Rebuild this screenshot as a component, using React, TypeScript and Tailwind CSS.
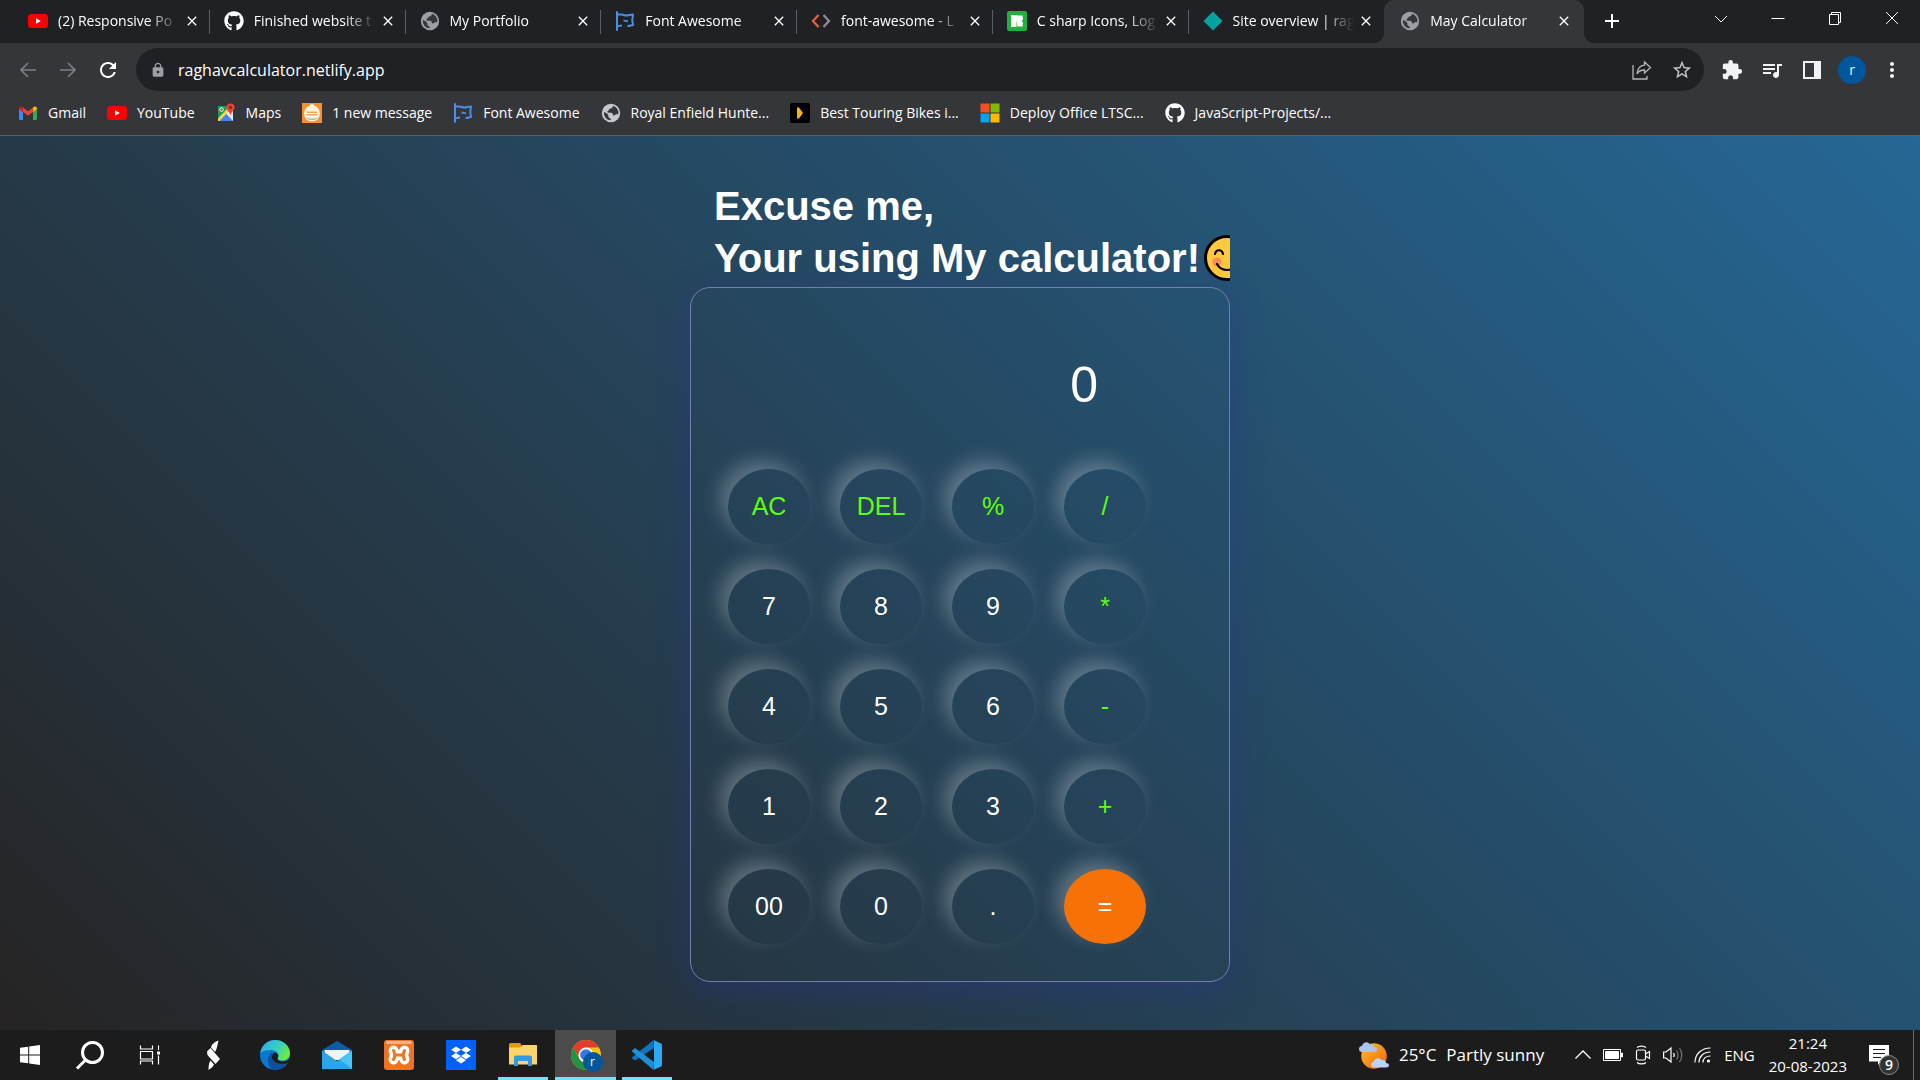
import type { ReactNode } from 'react';
import {
  MdAdd,
  MdClose,
  MdExtension,
  MdLock,
  MdMoreVert,
  MdQueueMusic,
  MdRefresh,
  MdStarBorder,
} from 'react-icons/md';
import { FaDropbox, FaGithub } from 'react-icons/fa';

/* ---------- favicons ---------- */

function YouTubeIcon() {
  return (
    <svg viewBox="0 0 20 20" className="size-5">
      <rect x="0" y="3" width="20" height="14" rx="3.5" fill="#ff0000" />
      <path d="M8 7.2v5.6l4.8-2.8z" fill="#fff" />
    </svg>
  );
}

function GlobeIcon({ light = false }: { light?: boolean }) {
  return (
    <svg viewBox="0 0 20 20" className="size-5">
      <circle cx="10" cy="10" r="9.2" fill={light ? '#c4c7cb' : '#9aa0a6'} />
      <path
        d="M12 2.8c-.3 1.6-1 2.6-2.6 2.8C8 5.900 8.300 7.200 7.200 7.700c-1.200.5-1 1.500-.2 1.800 1.200.5 3-.2 4.100.6 1.200.9.200 2.100 1.400 2.300 1.400.2 2-1.400 3.400-1.500.6 0 .9.300 1.300.500A7.300 7.300 0 0 0 12 2.800zM2.900 9c1.700.8 3.700 1.700 4.300 2.900.5 1-.2 1.800.6 2.500.8.7 1.800.600 1.900 1.500v1.400A7.300 7.300 0 0 1 2.900 9z"
        fill="#35363a"
      />
    </svg>
  );
}

function FlagIcon() {
  return (
    <svg viewBox="0 0 20 20" className="size-5" fill="none" stroke="#4a8fe7" strokeWidth="2">
      <path d="M2 1v18" strokeLinecap="round" />
      <path d="M2 3.500h4.500c2 0 2.500 1 5 1s3.500-1 6.500-1c-.8 3-.8 7.500 0 10.500-2.500.5-3.500 1-5.500 1" strokeLinejoin="round" />
      <path d="M2 15.500c2-.5 3-1 5-1M8.500 9.500c1.500 0 2.500.8 4.500.8" />
    </svg>
  );
}

function CodeIcon() {
  return (
    <svg viewBox="0 0 20 20" className="size-5" fill="none" strokeWidth="2.200">
      <path d="M7.500 4 2 10l5.500 6" stroke="#e8623a" />
      <path d="M12.500 4 18 10l-5.500 6" stroke="#8d8f92" />
    </svg>
  );
}

function Icons8Icon() {
  return (
    <svg viewBox="0 0 20 20" className="size-5">
      <rect width="20" height="20" rx="2" fill="#1fb141" />
      <path d="M4 4h5.500v12H4zM9.500 4.500h6l.5 4-1.500 1.500 1.500 1.500-.5 4h-5l-1-6z" fill="#fff" />
    </svg>
  );
}

function DiamondIcon() {
  return (
    <svg viewBox="0 0 20 20" className="size-5">
      <path d="M10 .500 19.500 10 10 19.500.500 10z" fill="#05a3a0" />
    </svg>
  );
}

function GmailIcon() {
  return (
    <svg viewBox="0 0 20 20" className="size-5">
      <path d="M1 5v10.500c0 .8.600 1.500 1.400 1.500H5V9z" fill="#4285f4" />
      <path d="M19 5v10.500c0 .8-.6 1.500-1.400 1.500H15V9z" fill="#34a853" />
      <path d="M15 4.500V9l4-3v-.6c0-1.700-1.900-2.600-3.200-1.500z" fill="#fbbc04" />
      <path d="M5 9V4.500l5 3.800 5-3.800V9l-5 3.800z" fill="#ea4335" />
      <path d="M1 5.400V6l4 3V4.500l-.8-.6C2.900 2.800 1 3.700 1 5.400z" fill="#c5221f" />
    </svg>
  );
}

function MapsIcon() {
  return (
    <svg viewBox="0 0 20 20" className="size-5">
      <path d="M2 3h15v15H2z" fill="#e8eaed" />
      <path d="M2 3h12L2 16z" fill="#1f9d55" />
      <path d="m2 18 7.500-8L17 18z" fill="#4285f4" />
      <path d="M2 15.500 12 5l2 2L3.500 18H2z" fill="#fbd24c" />
      <circle cx="5.500" cy="6.500" r="1.800" fill="none" stroke="#fff" strokeWidth="1" />
      <path d="M14.500.500a4 4 0 0 1 4 4c0 3-3.300 4-4 8-.7-4-4-5-4-8a4 4 0 0 1 4-4z" fill="#ea4335" />
      <circle cx="14.500" cy="4.500" r="1.400" fill="#8c1a11" />
    </svg>
  );
}

function MessageIcon() {
  return (
    <svg viewBox="0 0 20 20" className="size-5">
      <rect width="20" height="20" fill="#f7922d" />
      <circle cx="10" cy="10.500" r="8" fill="#fdf3e3" />
      <path d="M5 8.500h10v1.500H5zM4.500 11h11v1.500h-11z" fill="#f2a65a" />
      <path d="M3.500 14c2 4 11 4 13 0-3 2-10 2-13 0z" fill="#8fc28b" />
      <path d="M8 1.500h4v1.500H8z" fill="#fff" />
    </svg>
  );
}

function PlayBadgeIcon() {
  return (
    <svg viewBox="0 0 20 20" className="size-5">
      <rect width="20" height="20" rx="2" fill="#000" />
      <path d="M7 4.500h2L13 10l-4 5.500H7z" fill="#f5b50a" />
    </svg>
  );
}

function MicrosoftIcon() {
  return (
    <svg viewBox="0 0 20 20" className="size-5">
      <path d="M.500.500h9v9h-9z" fill="#f25022" />
      <path d="M10.500.500h9v9h-9z" fill="#7fba00" />
      <path d="M.500 10.500h9v9h-9z" fill="#00a4ef" />
      <path d="M10.500 10.500h9v9h-9z" fill="#ffb900" />
    </svg>
  );
}

/* ---------- browser chrome ---------- */

type Tab = { title: string; icon: ReactNode; active?: boolean };

const tabs: Tab[] = [
  { title: '(2) Responsive Po', icon: <YouTubeIcon /> },
  { title: 'Finished website t', icon: <FaGithub className="size-5" /> },
  { title: 'My Portfolio', icon: <GlobeIcon /> },
  { title: 'Font Awesome', icon: <FlagIcon /> },
  { title: 'font-awesome - L', icon: <CodeIcon /> },
  { title: 'C sharp Icons, Log', icon: <Icons8Icon /> },
  { title: 'Site overview | rag', icon: <DiamondIcon /> },
  { title: 'May Calculator', icon: <GlobeIcon />, active: true },
];

const bookmarks: { label: string; icon: ReactNode }[] = [
  { label: 'Gmail', icon: <GmailIcon /> },
  { label: 'YouTube', icon: <YouTubeIcon /> },
  { label: 'Maps', icon: <MapsIcon /> },
  { label: '1 new message', icon: <MessageIcon /> },
  { label: 'Font Awesome', icon: <FlagIcon /> },
  { label: 'Royal Enfield Hunte...', icon: <GlobeIcon light /> },
  { label: 'Best Touring Bikes i...', icon: <PlayBadgeIcon /> },
  { label: 'Deploy Office LTSC...', icon: <MicrosoftIcon /> },
  { label: 'JavaScript-Projects/...', icon: <FaGithub className="size-5" /> },
];

function TabItem({ tab, divider }: { tab: Tab; divider: boolean }) {
  return (
    <div
      role="tab"
      aria-selected={!!tab.active}
      className={
        tab.active
          ? 'relative flex min-w-0 flex-1 items-center rounded-t-[10px] bg-[#35363a] pr-3 pb-0.5 pl-4'
          : 'relative flex min-w-0 flex-1 items-center pr-2.5 pb-0.5 pl-3.5'
      }
    >
      {tab.active && (
        <>
          <span className="absolute bottom-0 -left-2.5 size-2.5 bg-[radial-gradient(circle_at_0_0,transparent_10px,#35363a_10px)]" />
          <span className="absolute -right-2.5 bottom-0 size-2.5 bg-[radial-gradient(circle_at_100%_0,transparent_10px,#35363a_10px)]" />
        </>
      )}
      {tab.icon}
      <span className="ml-2.5 min-w-0 flex-1 overflow-hidden whitespace-nowrap [mask-image:linear-gradient(to_right,#000_calc(100%-32px),transparent)]">
        {tab.title}
      </span>
      <button aria-label={`Close ${tab.title}`} className="ml-1 flex shrink-0">
        <MdClose className="size-4" />
      </button>
      {divider && <span className="absolute top-2.5 right-0 h-6 w-px bg-[#5b5e63]" />}
    </div>
  );
}

function WindowControls() {
  return (
    <div className="flex h-9 items-center">
      {[
        ['Search tabs', 'M3 7l6 6 6-6'],
        ['Minimize', 'M2.500 9.500h13'],
        ['Restore', 'M3.500 5.500h9v10h-9zM5.500 5.500v-2h9v10h-2'],
        ['Close', 'M3 3l12 12M15 3 3 15'],
      ].map(([name, d]) => (
        <button key={name} aria-label={name} className="flex w-[57px] justify-center">
          <svg viewBox="0 0 18 18" className="size-[18px]" fill="none" stroke="#fff" strokeWidth="1">
            <path d={d} />
          </svg>
        </button>
      ))}
    </div>
  );
}

function Arrow({ name, d }: { name: string; d: string }) {
  return (
    <button aria-label={name} className="flex w-10 justify-center">
      <svg viewBox="0 0 20 20" className="size-5" fill="none" stroke="#7d8084" strokeWidth="1.600">
        <path d={d} />
      </svg>
    </button>
  );
}

function BrowserChrome() {
  return (
    <header className="bg-[#35363a] font-['Open_Sans',sans-serif] text-sm text-white">
      <div className="flex h-[43px] justify-between bg-[#202124] pl-3.5">
        <div className="flex min-w-0 flex-1">
          <div role="tablist" className="flex max-w-[1570px] min-w-0 flex-1">
            {tabs.map((tab, i) => (
              <TabItem key={tab.title} tab={tab} divider={i < tabs.length - 2} />
            ))}
          </div>
          <button aria-label="New tab" className="ml-4 flex items-center pb-0.5">
            <MdAdd className="size-6" />
          </button>
        </div>
        <WindowControls />
      </div>

      <div className="flex h-[53px] items-center pr-2 pl-2">
        <Arrow name="Back" d="M18 10H3M10 3l-7 7 7 7" />
        <Arrow name="Forward" d="M2 10h15M10 3l7 7-7 7" />
        <button aria-label="Reload" className="flex w-10 justify-center">
          <MdRefresh className="size-6" />
        </button>
        <div className="ml-2 flex h-[43px] min-w-0 flex-1 items-center rounded-full bg-[#202124] pr-0.5 pl-3.5">
          <MdLock className="size-4 text-[#9aa0a6]" />
          <input
            aria-label="Address"
            defaultValue="raghavcalculator.netlify.app"
            className="ml-3 min-w-0 flex-1 bg-transparent text-base outline-none"
          />
          <button aria-label="Share" className="flex w-10 justify-center">
            <svg viewBox="0 0 20 20" className="size-5" fill="none" stroke="#b4b6b9" strokeWidth="1.300">
              <path d="M1 5v14h14v-3" />
              <path d="M12.500 2l6 5.500-6 5.500v-3c-3.500 0-6 1-7.500 4 .5-5 3-8.500 7.500-8.800z" />
            </svg>
          </button>
          <button aria-label="Bookmark this tab" className="flex w-10 justify-center text-[#c4c7ca]">
            <MdStarBorder className="size-[22px]" />
          </button>
        </div>
        <div className="ml-2 flex items-center text-[#f1f3f4]">
          <button aria-label="Extensions" className="flex w-10 justify-center">
            <MdExtension className="size-[22px]" />
          </button>
          <button aria-label="Media" className="flex w-10 justify-center">
            <MdQueueMusic className="size-6" />
          </button>
          <button aria-label="Side panel" className="flex w-10 justify-center">
            <svg viewBox="0 0 18 18" className="size-[18px]" fill="currentColor">
              <path d="M0 0h18v18H0zM2 2v14h9V2z" fillRule="evenodd" />
            </svg>
          </button>
          <button aria-label="Profile" className="flex w-10 justify-center">
            <span className="flex size-7 items-center justify-center rounded-full bg-[#01579b] text-sm leading-none">
              r
            </span>
          </button>
          <button aria-label="Menu" className="flex w-10 justify-center">
            <MdMoreVert className="size-6" />
          </button>
        </div>
      </div>

      <nav className="flex h-10 items-center gap-[21px] border-b border-[#5f6063] pb-1.5 pl-[18px] whitespace-nowrap">
        {bookmarks.map((b) => (
          <a key={b.label} href="#" className="flex items-center gap-2.5">
            {b.icon}
            {b.label}
          </a>
        ))}
      </nav>
    </header>
  );
}

/* ---------- calculator ---------- */

const keys = [
  'AC', 'DEL', '%', '/',
  '7', '8', '9', '*',
  '4', '5', '6', '-',
  '1', '2', '3', '+',
  '00', '0', '.', '=',
];

const operators = ['AC', 'DEL', '%', '/', '*', '-', '+'];

function SmileIcon() {
  return (
    <svg viewBox="0 0 46 46" className="ml-1 size-[46px] shrink-0" role="img" aria-label="Smiling face">
      <circle cx="23" cy="23" r="21.500" fill="#ffc83d" stroke="#000" strokeWidth="3" />
      <circle cx="13" cy="27" r="4.500" fill="#ff8a55" />
      <circle cx="33" cy="27" r="4.500" fill="#ff8a55" />
      <path
        d="M11 19c1-5 7-5 8 0M27 19c1-5 7-5 8 0M13 29c4 8 16 8 20 0"
        fill="none"
        stroke="#000"
        strokeWidth="2.200"
        strokeLinecap="round"
      />
    </svg>
  );
}

function Calculator() {
  return (
    <main className="flex flex-1 flex-col items-center bg-[linear-gradient(45deg,#262424,#256795)] pt-11 pb-12 font-['Liberation_Sans',Arial,sans-serif] text-white">
      <div className="w-[540px] max-w-full">
        <h1 className="overflow-hidden pl-6 text-[40px] leading-[52px] font-bold whitespace-nowrap">
          Excuse me,
          <span className="flex items-center">
            Your using My calculator!
            <SmileIcon />
          </span>
        </h1>
        <section className="mt-[3px] rounded-[20px] border border-[#7380a8] p-[37px] shadow-[0_8px_32px_rgba(45,50,150,0.4)]">
          <input
            aria-label="Result"
            defaultValue="0"
            className="mb-6 block h-[120px] w-[370px] bg-transparent text-right text-[50px] outline-none"
          />
          <div className="grid grid-cols-[repeat(4,82px)] gap-x-[30px] gap-y-[25px]">
            {keys.map((key) => (
              <button
                key={key}
                className={
                  key === '='
                    ? 'h-[75px] rounded-[50%] bg-[#f77206] text-[25px] shadow-[-8px_-8px_20px_rgba(255,255,255,0.27)]'
                    : operators.includes(key)
                      ? 'h-[75px] rounded-[50%] text-[25px] text-[#5dff0a] shadow-[-8px_-8px_20px_rgba(255,255,255,0.27)]'
                      : 'h-[75px] rounded-[50%] text-[25px] shadow-[-8px_-8px_20px_rgba(255,255,255,0.27)]'
                }
              >
                {key}
              </button>
            ))}
          </div>
        </section>
      </div>
    </main>
  );
}

/* ---------- taskbar ---------- */

function StartIcon() {
  return (
    <svg viewBox="0 0 20 20" className="size-5" fill="#fff">
      <path d="M0 2.800 8.200 1.700v7.800H0zM9.200 1.500 20 0v9.500H9.200zM0 10.500h8.200v7.800L0 17.200zM9.200 10.500H20V20L9.200 18.500z" />
    </svg>
  );
}

function SearchIcon() {
  return (
    <svg viewBox="0 0 30 30" className="size-[30px]" fill="none" stroke="#fff" strokeWidth="3">
      <circle cx="17.500" cy="12.500" r="10" />
      <path d="M10.500 20 2 28.500" />
    </svg>
  );
}

function TaskViewIcon() {
  return (
    <svg viewBox="0 0 22 20" className="h-5 w-[22px]" fill="none" stroke="#fff" strokeWidth="1.200">
      <path d="M1.500.500V4h12V.500M1.500 19.500V16h12v3.500M1.500 6.500h12v7.500h-12zM19.500.500V5M19.500 10.500v9" />
      <path d="M18 6.500h3v3h-3z" fill="#fff" stroke="none" />
    </svg>
  );
}

function BoltIcon() {
  return (
    <svg viewBox="0 0 30 30" className="size-[30px]" fill="#fff">
      <path d="M20.500.500c-4.500 1.500-7 4-7.500 7l4 4.500c2-3 2.500-7 3.500-11.500z" />
      <path d="M9 11.500 12.500 8 22 19l-4.500 5-8-9z" />
      <path d="M10.500 30c0-3.500.2-7 2-9.500l3.500 4c-1 2.500-3.500 4-5.500 5.500z" />
    </svg>
  );
}

function EdgeIcon() {
  return (
    <svg viewBox="0 0 30 30" className="size-[30px]">
      <defs>
        <linearGradient id="edgeTop" x1="0" y1="0" x2="1" y2="0.500">
          <stop offset="0.200" stopColor="#2fb4e0" />
          <stop offset="0.600" stopColor="#38cfc0" />
          <stop offset="1" stopColor="#6be84a" />
        </linearGradient>
      </defs>
      <circle cx="15" cy="15" r="15" fill="#0a78d0" />
      <path
        d="M.300 13C1.500 5.500 7.500 0 15 0c9 0 15 6.500 15 13 0 5-3.800 7.500-7.500 7.500-3 0-5-1.200-4.500-2.500 2-3-1-8-7-8-5 0-9 1-10.700 3z"
        fill="url(#edgeTop)"
      />
      <path d="M8 20c0-4 2-6.500 5-7.500-2.500 3-.5 8 3.500 9.800 4 1.800 7.500 1 10.500-.3C24.500 27 20 30 15 30c-4 0-7-4.500-7-10z" fill="#0f4fa0" />
      <path d="M17.500 18.500c-.8 1.200 1.500 3 5 3 3 0 5.500-1 7.500-3.500l1 3-4.500 2.500C20 24.500 13.500 23 12 18c-.5-2.500 1-5 3-5.500 3 .5 4 3.500 2.500 6z" fill="#1c1c1c" />
    </svg>
  );
}

function MailIcon() {
  return (
    <svg viewBox="0 0 30 30" className="size-[30px]">
      <path d="M15 1 30 10v4H0v-4z" fill="#0f5ba8" />
      <path d="M2.500 10h25v10h-25z" fill="#f3f3f3" />
      <path d="M0 10.500 15 21l15-10.500V29H0z" fill="#2aa6e6" />
      <path d="m30 10.500-12.500 9L30 29z" fill="#48c6f5" />
    </svg>
  );
}

function XamppIcon() {
  return (
    <svg viewBox="0 0 30 30" className="size-[30px]">
      <rect width="30" height="30" rx="3" fill="#ee7424" />
      <rect x="2" y="1" width="26" height="3" rx="1.500" fill="#f7b184" />
      <g fill="none" strokeLinecap="round">
        <path d="M9.500 10.500Q12 15 9.500 19.500M20.500 10.500Q18 15 20.500 19.500M11 15h8" stroke="#fff" strokeWidth="10" />
        <path d="M9.500 10.500Q12 15 9.500 19.500M20.500 10.500Q18 15 20.500 19.500M11 15h8" stroke="#ee7424" strokeWidth="3" />
      </g>
    </svg>
  );
}

function FolderIcon() {
  return (
    <svg viewBox="0 0 30 30" className="size-[30px]">
      <path d="M1 5c0-1 .5-2 1.500-2H12l2 2.500h-1V8H1z" fill="#dd9b0a" />
      <path d="M1 7.500h11l2.500-2.500H28c.6 0 1 .4 1 1v18.500H1z" fill="#fdd469" />
      <path d="M6 26v-8.500c0-1.300.9-2 2-2h14c1.100 0 2 .7 2 2V26h-4v-5h-10v5z" fill="#3a96dd" />
    </svg>
  );
}

function ChromeIcon() {
  return (
    <span className="relative">
      <svg viewBox="0 0 30 30" className="size-[30px]">
        <circle cx="15" cy="15" r="15" fill="#fbc116" />
        <path d="M15 0a15 15 0 0 1 13 7.500H15a7.500 7.500 0 0 0-6.500 11.200L2 7.500A15 15 0 0 1 15 0z" fill="#e33b2e" />
        <path d="M2 7.500 8.500 18.700A7.500 7.500 0 0 0 15 22.500h6.500L15 30A15 15 0 0 1 2 7.500z" fill="#229342" />
        <circle cx="15" cy="15" r="7.500" fill="#fff" />
        <circle cx="15" cy="15" r="5.800" fill="#3578e5" />
      </svg>
      <span className="absolute top-3 left-3 flex size-5 items-center justify-center rounded-full bg-[#01579b] text-xs leading-none">
        r
      </span>
    </span>
  );
}

function CodeEditorIcon() {
  return (
    <svg viewBox="0 0 30 30" className="size-[30px]">
      <path d="M3 20.500 0 18.500v-1L21.500 0l.5 8z" fill="#0b76bd" />
      <path d="M3 8 0 10.500v1L21.500 30l.5-8z" fill="#1f8fd6" />
      <path d="M21.500 0 29 3.500c.7.300 1 .8 1 1.500v20c0 .7-.3 1.200-1 1.500L21.500 30c.5-.5.500-1 .5-1.500v-27c0-.5 0-1-.5-1.500z" fill="#2aa9f3" />
    </svg>
  );
}

function WeatherIcon() {
  return (
    <svg viewBox="0 0 30 28" className="h-7 w-[30px]">
      <defs>
        <linearGradient id="sun" x1="0" y1="0" x2="1" y2="1">
          <stop offset="0" stopColor="#f9c22b" />
          <stop offset="1" stopColor="#f2600c" />
        </linearGradient>
      </defs>
      <circle cx="15" cy="15" r="12.800" fill="url(#sun)" />
      <path d="M3 11a3 3 0 0 1 0-6C4 1 9 0 11 3.500c3-.5 4 1 4 2.500 4 0 4 5 0 5z" fill="#a9c5f5" />
      <path d="M15 26.500c-4 0-4-5-.5-5.500.5-4 6-5 8-2 3-.5 4.500 1 4.500 3 4 0 4 4.500 0 4.500z" fill="#bcd2fa" />
    </svg>
  );
}

const pinned: { name: string; icon: ReactNode; state?: 'open' | 'focused' }[] = [
  { name: 'Bolt', icon: <BoltIcon /> },
  { name: 'Edge', icon: <EdgeIcon /> },
  { name: 'Mail', icon: <MailIcon /> },
  { name: 'XAMPP', icon: <XamppIcon /> },
  {
    name: 'Dropbox',
    icon: (
      <span className="flex size-[30px] items-center justify-center bg-[#0061ff]">
        <FaDropbox className="size-5" />
      </span>
    ),
  },
  { name: 'File Explorer', icon: <FolderIcon />, state: 'open' },
  { name: 'Chrome', icon: <ChromeIcon />, state: 'focused' },
  { name: 'Code', icon: <CodeEditorIcon />, state: 'open' },
];

function Taskbar() {
  return (
    <footer className="flex h-[50px] items-stretch justify-between bg-[#1c1c1c] font-['Open_Sans',sans-serif] text-[15px] whitespace-nowrap text-white">
      <div className="flex">
        <button aria-label="Start" className="flex w-[60px] items-center justify-center">
          <StartIcon />
        </button>
        <button aria-label="Search" className="flex w-[60px] items-center justify-center">
          <SearchIcon />
        </button>
        <button aria-label="Task view" className="mr-0.5 flex w-[60px] items-center justify-center">
          <TaskViewIcon />
        </button>
        {pinned.map(({ name, icon, state }) => (
          <button
            key={name}
            aria-label={name}
            className={
              state === 'focused'
                ? 'relative ml-px flex w-[61px] items-center justify-center bg-[#4b4b4b]'
                : 'relative flex w-[62px] items-center justify-center'
            }
          >
            {icon}
            {state === 'open' && <span className="absolute inset-x-1.5 bottom-0 h-[3px] bg-[#76e0fb]" />}
            {state === 'focused' && <span className="absolute inset-x-0 bottom-0 h-[3px] bg-[#76e0fb]" />}
          </button>
        ))}
      </div>

      <div className="flex items-center">
        <button className="flex items-center gap-2.5 text-[17px]">
          <WeatherIcon />
          <span>25°C</span>
          <span>Partly sunny</span>
        </button>
        <div className="ml-[30px] flex items-center gap-[11px]">
          <svg viewBox="0 0 18 18" className="size-[18px]" fill="none" stroke="#fff" strokeWidth="1.300">
            <path d="M1.500 12.500 9 5l7.500 7.500" />
          </svg>
          <svg viewBox="0 0 20 12" className="h-3 w-5" fill="none" stroke="#fff">
            <path d="M.500.500h17v11H.500z" />
            <path d="M2.500 2.500h13v7h-13zM18.500 4v4h1V4z" fill="#fff" />
          </svg>
          <svg viewBox="0 0 18 20" className="h-5 w-[18px]" fill="none" stroke="#fff" strokeWidth="1.200">
            <rect x="2.500" y="5" width="9" height="10" rx="1.500" />
            <path d="M11.500 9 15.500 6.500v7L11.500 11M3 2.500C5 .700 10 .700 12 2.500M3 17.500c2 1.800 7 1.800 9 0" />
          </svg>
          <svg viewBox="0 0 20 18" className="h-[18px] w-5" fill="none" stroke="#fff" strokeWidth="1.200">
            <path d="M.600 6H3l5-4v14l-5-4H.600z" />
            <path d="M10.500 7c.8 1 .8 3 0 4" />
            <path d="M13.500 4.500c2 2.500 2 6.500 0 9M16.500 2c3 4 3 10 0 14" stroke="#777" />
          </svg>
          <svg viewBox="0 0 18 18" className="size-[18px]" fill="none" stroke="#fff" strokeWidth="1.200">
            <path d="M1 16.500C1 8 7.500 2 16.500 2M5 16.500C5 10.500 9.500 6 16.500 6M9 16.500C9 12.500 12 10 16.500 10" />
            <circle cx="14.500" cy="15" r="1.600" fill="#fff" stroke="none" />
          </svg>
        </div>
        <span className="ml-3">ENG</span>
        <time className="ml-3.5 text-center leading-[23px]">
          <span className="block">21:24</span>
          <span className="block">20-08-2023</span>
        </time>
        <button aria-label="Notifications" className="relative ml-[22px] flex">
          <svg viewBox="0 0 20 21" className="h-[21px] w-5">
            <path d="M0 0h20v16.500h-8L9 20v-3.500H0z" fill="#fff" />
            <path d="M4 4.500h12M4 8.500h12M4 12.500h8" stroke="#1c1c1c" />
          </svg>
          <span className="absolute top-2.5 left-2.5 flex size-5 items-center justify-center rounded-full border border-[#8b8b8b] bg-[#333] text-sm leading-none font-semibold">
            9
          </span>
        </button>
        <span className="mr-1.5 ml-6 h-full w-px bg-[#6b6b6b]" />
      </div>
    </footer>
  );
}

export default function App() {
  return (
    <div className="flex min-h-screen flex-col">
      <BrowserChrome />
      <Calculator />
      <Taskbar />
    </div>
  );
}
